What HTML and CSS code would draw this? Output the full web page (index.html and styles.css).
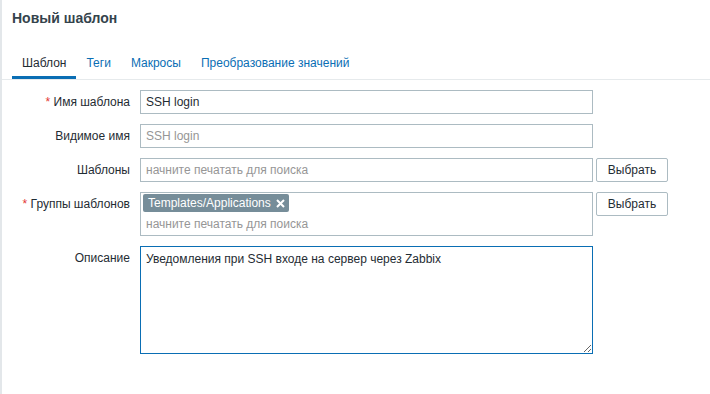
FILE: index.html
```html
<!DOCTYPE html>
<html lang="ru">
<head>
    <meta charset="UTF-8">
    <meta name="viewport" content="width=device-width, initial-scale=1.0">
    <title>Новый шаблон</title>
    <link rel="stylesheet" href="styles.css">
</head>
<body>
    <div class="header">
        <h1>Новый шаблон</h1>
    </div>

    <ul class="tabs">
        <li class="active">Шаблон</li>
        <li>Теги</li>
        <li>Макросы</li>
        <li>Преобразование значений</li>
    </ul>

    <form class="form">
        <div class="row">
            <label class="label"><span class="req">*</span> Имя шаблона</label>
            <input class="field" type="text" value="SSH login">
        </div>
        <div class="row">
            <label class="label">Видимое имя</label>
            <input class="field" type="text" placeholder="SSH login">
        </div>
        <div class="row">
            <label class="label">Шаблоны</label>
            <input class="field" type="text" placeholder="начните печатать для поиска">
            <button type="button" class="btn">Выбрать</button>
        </div>
        <div class="row">
            <label class="label"><span class="req">*</span> Группы шаблонов</label>
            <div class="multiselect">
                <div class="chips">
                    <span class="chip">Templates/Applications
                        <svg width="9" height="9" viewBox="0 0 9 9"><path d="M1 1 L8 8 M8 1 L1 8" stroke="#fff" stroke-width="2"/></svg>
                    </span>
                </div>
                <input class="ms-input" type="text" placeholder="начните печатать для поиска">
            </div>
            <button type="button" class="btn">Выбрать</button>
        </div>
        <div class="row">
            <label class="label">Описание</label>
            <textarea class="area">Уведомления при SSH входе на сервер через Zabbix</textarea>
        </div>
    </form>
</body>
</html>
```

FILE: styles.css
```css
body {
    font-family: "Liberation Sans", Arial, sans-serif;
    font-size: 12px;
    color: #1f2c33;
    margin: 0;
    padding: 0;
    background-color: #fff;
    border-left: 2px solid #e3e7ea;
    min-height: 394px;
    box-sizing: border-box;
}
.header {
    padding: 10px 10px 0;
}
.header h1 {
    margin: 0;
    font-size: 14px;
    line-height: 16px;
    font-weight: bold;
    color: #34434c;
}
.tabs {
    list-style: none;
    margin: 22px 0 0;
    padding: 0 0 0 10px;
    display: flex;
    border-bottom: 1px solid #e6eaec;
}
.tabs li {
    padding: 7px 10px 5px;
    line-height: 16px;
    color: #0a6eb4;
    border-bottom: 3px solid transparent;
}
.tabs li.active {
    color: #1f2c33;
    border-bottom-color: #0a6eb4;
}
.form {
    padding: 10px 0 0 10px;
}
.row {
    display: flex;
    align-items: flex-start;
    margin-bottom: 10px;
}
.label {
    width: 118px;
    margin-right: 10px;
    text-align: right;
    line-height: 24px;
    white-space: nowrap;
}
.req {
    color: #e33734;
}
.field {
    width: 453px;
    height: 24px;
    box-sizing: border-box;
    border: 1px solid #acbbc2;
    padding: 0 5px;
    margin: 0;
    font-family: inherit;
    font-size: 12px;
    color: #1f2c33;
    outline: none;
}
.field::placeholder, .ms-input::placeholder {
    color: #969696;
}
.btn {
    width: 72px;
    height: 24px;
    margin-left: 3px;
    background-color: #fff;
    border: 1px solid #acbbc2;
    border-radius: 2px;
    font-family: inherit;
    font-size: 12px;
    color: #1f2c33;
    padding: 0;
}
.multiselect {
    width: 453px;
    height: 44px;
    box-sizing: border-box;
    border: 1px solid #acbbc2;
    display: flex;
    flex-direction: column;
}
.chips {
    padding: 1px 2px 0;
    display: flex;
}
.chip {
    display: flex;
    align-items: center;
    gap: 5px;
    height: 18px;
    line-height: 18px;
    padding: 0 4px 0 5px;
    background-color: #768d99;
    color: #fff;
    border-radius: 2px;
}
.ms-input {
    height: 23px;
    border: none;
    padding: 0 5px;
    margin: 0;
    font-family: inherit;
    font-size: 12px;
    outline: none;
}
.area {
    width: 453px;
    height: 108px;
    box-sizing: border-box;
    border: 1px solid #0a6eb4;
    padding: 4px 5px;
    margin: 0;
    font-family: inherit;
    font-size: 12px;
    line-height: 16px;
    color: #1f2c33;
    outline: none;
    resize: both;
}
```
